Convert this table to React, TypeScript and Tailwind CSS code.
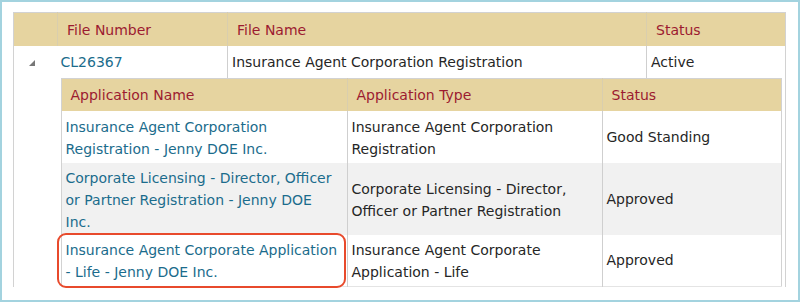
import React from 'react';

interface AppRow {
    name: string;
    type: string;
    status: string;
    shaded: boolean;
    height: string;
}

const applications: AppRow[] = [
    {
        name: 'Insurance Agent Corporation Registration - Jenny DOE Inc.',
        type: 'Insurance Agent Corporation Registration',
        status: 'Good Standing',
        shaded: false,
        height: 'h-[52px]',
    },
    {
        name: 'Corporate Licensing - Director, Officer or Partner Registration - Jenny DOE Inc.',
        type: 'Corporate Licensing - Director, Officer or Partner Registration',
        status: 'Approved',
        shaded: true,
        height: 'h-[72px]',
    },
    {
        name: 'Insurance Agent Corporate Application - Life - Jenny DOE Inc.',
        type: 'Insurance Agent Corporate Application - Life',
        status: 'Approved',
        shaded: false,
        height: 'h-[51px]',
    },
];

const headCell = 'px-[9px] text-left font-normal text-[#9c1b30] border-l border-[#d9ceae] first:border-l-0';

const ApplicationsTable: React.FC = () => (
    <table className="w-[720px] table-fixed border-collapse border border-[#d2d2d2] border-b-[#e4e4e4]">
        <colgroup>
            <col className="w-[286px]" />
            <col className="w-[255px]" />
            <col className="w-[179px]" />
        </colgroup>
        <thead>
            <tr className="h-[33px] bg-[#e6d4a0]">
                <th className={headCell}>Application Name</th>
                <th className={headCell}>Application Type</th>
                <th className={headCell}>Status</th>
            </tr>
        </thead>
        <tbody>
            {applications.map(app => (
                <tr key={app.name} className={`${app.height} ${app.shaded ? 'bg-[#f1f1f1]' : 'bg-white'}`}>
                    <td className="pl-[4px] pr-[8px] pt-[1px] align-middle">
                        <a href="#" className="text-[#1b6c8c]">{app.name}</a>
                    </td>
                    <td className="px-[4px] pt-[1px] align-middle border-l border-[#cfcfcf]">{app.type}</td>
                    <td className="px-[4px] align-middle border-l border-[#cfcfcf]">{app.status}</td>
                </tr>
            ))}
        </tbody>
    </table>
);

export default function App() {
    return (
        <div
            className="relative w-[800px] h-[302px] border-2 border-[#a3d3df] bg-white pt-[10px] pl-[11px] text-[14px] leading-[22px] text-[#262626]"
            style={{ fontFamily: '"DejaVu Sans", Verdana, sans-serif' }}
        >
            <table className="w-[772px] table-fixed border-collapse border border-[#d2d2d2] border-b-0">
                <colgroup>
                    <col className="w-[44px]" />
                    <col className="w-[170px]" />
                    <col className="w-[419px]" />
                    <col className="w-[139px]" />
                </colgroup>
                <thead>
                    <tr className="h-[33px] bg-[#e6d4a0]">
                        <th className="border-r border-[#d9ceae]"></th>
                        <th className="px-[9px] pt-[2px] text-left font-normal text-[#9c1b30] border-r border-[#d9ceae]">File Number</th>
                        <th className="px-[9px] pt-[2px] text-left font-normal text-[#9c1b30] border-r border-[#d9ceae]">File Name</th>
                        <th className="px-[9px] pt-[2px] text-left font-normal text-[#9c1b30]">Status</th>
                    </tr>
                </thead>
                <tbody>
                    <tr className="h-[32px]">
                        <td className="align-middle">
                            <div className="flex justify-center pr-[8px] pt-[2px]">
                                <svg width="6" height="6" viewBox="0 0 6 6">
                                    <polygon points="6,0 6,6 0,6" fill="#777" />
                                </svg>
                            </div>
                        </td>
                        <td className="pl-[3px] align-middle">
                            <a href="#" className="text-[#1b6c8c]">CL26367</a>
                        </td>
                        <td className="px-[4px] align-middle border-l border-[#cfcfcf]">Insurance Agent Corporation Registration</td>
                        <td className="px-[4px] align-middle border-l border-[#cfcfcf]">Active</td>
                    </tr>
                    <tr>
                        <td></td>
                        <td colSpan={3} className="pl-[3px] pr-[4px] pb-0 align-top">
                            <ApplicationsTable />
                        </td>
                    </tr>
                </tbody>
            </table>

            {/* highlight around the last application */}
            <div className="absolute left-[55px] top-[231px] w-[289px] h-[55px] rounded-[9px] border-2 border-[#e84a2c] pointer-events-none" />
        </div>
    );
}
